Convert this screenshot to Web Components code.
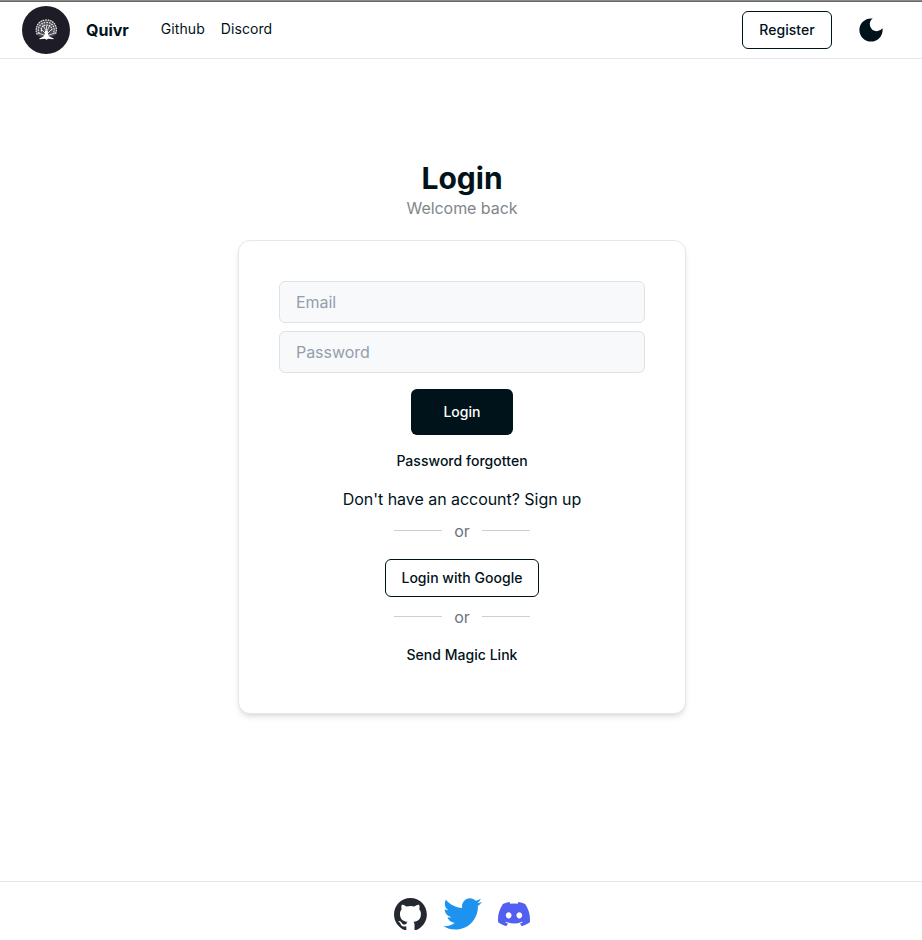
<!DOCTYPE html>
<html lang="en">
<head>
<meta charset="utf-8">
<title>Quivr</title>
<style>
html,body{height:100%}
body{margin:0;background:#fff;color:#00121a;font-family:Inter,"Liberation Sans",sans-serif;font-size:16px;line-height:24px}
</style>
</head>
<body>
<quivr-app></quivr-app>
<script>
function define(name, markup) {
  const template = document.createElement('template');
  template.innerHTML = markup;
  customElements.define(name, class extends HTMLElement {
    constructor() {
      super();
      this.attachShadow({ mode: 'open' }).appendChild(template.content.cloneNode(true));
    }
  });
}

define('quivr-logo', `
<style>:host{display:block;width:48px;height:48px}svg{display:block}</style>
<svg width="48" height="48" viewBox="0 0 48 48">
  <circle cx="24" cy="24" r="24" fill="#1e1c26"/>
  <path d="M15 29C12 23 15 13.500 24.500 13.500S37 23 33.500 29q-4 3-9 1.500-6 1.500-9.500-1.500z" fill="#77757d" opacity=".5"/>
  <g fill="none" stroke="#e6e5e9" stroke-linecap="round">
    <path d="M24.500 31V20M24 28l-5-5M25 28l5-5M24 25l-3-6M25 25l3-6M22 29l-6-2M27 29l6-2" stroke-width=".9"/>
    <g stroke-width="1.300">
      <path d="M15 28C12.500 22 16 14 24.500 14S36 22 33.500 28" stroke-dasharray=".5 1.900"/>
      <path d="M17 27C15 22 18 16.500 24.500 16.500S33.500 22 31.500 27" stroke-dasharray=".6 2"/>
      <path d="M19.500 25C18.500 22 20.500 19 24.500 19S30.500 22 29.500 25" stroke-dasharray=".5 1.900"/>
    </g>
  </g>
  <path d="M23 25h2.800c0 4.500 1.500 6.200 5.700 7.300v1l-5.200-.5-1.800 1-1.800-1-5.200.5v-1c4.200-1.100 5.500-2.800 5.500-7.300z" fill="#fff"/>
</svg>`);

define('quivr-button', `
<style>
:host{display:inline-flex}
button{flex:1;box-sizing:border-box;margin:0;font:500 14px/20px Inter,"Liberation Sans",sans-serif;letter-spacing:.03px;color:#00121a;background:transparent;border:1px solid transparent;border-radius:6px;padding:8px 0;white-space:nowrap}
:host([variant=outline]) button{border-color:#00121a}
:host([variant=primary]) button{background:#00121a;color:#fff;padding:12px 0}
</style><button type="button"><slot></slot></button>`);

define('quivr-header', `
<style>
:host{display:flex;box-sizing:border-box;height:59px;border-bottom:1px solid #e5e7eb;padding:6px 35px 4px 22px;align-items:flex-start}
.brand{display:flex;align-items:center;gap:16px;height:48px}
b{font-weight:700}
nav{display:flex;gap:16px;margin-left:32px;padding-top:13px;font-size:14px;line-height:20px;letter-spacing:.07px}
.actions{display:flex;align-items:center;gap:23px;margin-left:auto;height:48px}
.actions quivr-button{width:90px}
svg{display:block}
:host::before{content:"";position:absolute;top:0;left:0;right:0;height:2px;background:linear-gradient(#8a8a8a 50%,#686868 50%)}
</style>
<div class="brand"><quivr-logo></quivr-logo><b>Quivr</b></div>
<nav><span>Github</span><span>Discord</span></nav>
<div class="actions"><quivr-button variant="outline">Register</quivr-button>
<svg width="32" height="32" viewBox="-.4 -.4 24.800 24.800" fill="currentColor"><path d="M12 3a9 9 0 1 0 9 9c0-.46-.04-.92-.1-1.360a5.389 5.389 0 0 1-4.400 2.260 5.403 5.403 0 0 1-3.140-9.800c-.44-.06-.9-.1-1.360-.1z"/></svg></div>`);

customElements.define('quivr-field', class extends HTMLElement {
  constructor() {
    super();
    this.attachShadow({ mode: 'open' }).innerHTML = `
<style>
:host{display:block}
input{display:block;box-sizing:border-box;width:100%;height:42px;margin:0;padding:8px 16px;border:1px solid #dfe2e4;border-radius:6px;background:#f8f9fb;font:400 16px/24px Inter,"Liberation Sans",sans-serif;letter-spacing:-.05px}
input::placeholder{color:#949dab;opacity:1}
</style><input>`;
  }
  connectedCallback() {
    const input = this.shadowRoot.querySelector('input');
    input.placeholder = this.getAttribute('label');
    input.type = this.getAttribute('type');
  }
});

define('quivr-divider', `
<style>
:host{display:flex;align-items:center;justify-content:center;gap:12px;height:24px;color:#6b7280}
i{width:48px;height:1px;background:#cbcfd5;margin-bottom:1px}
</style><i></i><span><slot></slot></span><i></i>`);

define('quivr-card', `
<style>
:host{display:flex;flex-direction:column;align-items:center;box-sizing:border-box;width:448px;height:474px;padding:40px;border:1px solid #e5e7eb;border-radius:12px;background:#fff;box-shadow:0 4px 6px -1px rgba(0,0,0,.1),0 2px 4px -2px rgba(0,0,0,.1)}
</style><slot></slot>`);

define('quivr-login', `
<style>
:host{display:flex;flex-direction:column;align-items:center;flex:1;padding:101px 0 0 2px}
h1{margin:0;font-size:30px;line-height:36px;font-weight:700}
p{margin:0}
.sub{color:#7f878c;margin-bottom:20px;letter-spacing:-.05px}
form{display:flex;flex-direction:column;align-items:center;width:100%;margin:0}
quivr-field{width:100%;margin-bottom:8px}
.submit{width:102px;margin:8px 0 7px}
.signup{margin:7px 0 8px;letter-spacing:-.04px}
.google{width:154px;margin:16px 0 8px}
.magic{margin-top:7px}
</style>
<h1>Login</h1><p class="sub">Welcome back</p>
<quivr-card><form>
<quivr-field label="Email" type="email"></quivr-field>
<quivr-field label="Password" type="password"></quivr-field>
<quivr-button class="submit" variant="primary">Login</quivr-button>
<quivr-button>Password forgotten</quivr-button>
<p class="signup">Don't have an account? Sign up</p>
<quivr-divider>or</quivr-divider>
<quivr-button class="google" variant="outline">Login with Google</quivr-button>
<quivr-divider>or</quivr-divider>
<quivr-button class="magic">Send Magic Link</quivr-button>
</form></quivr-card>`);

define('quivr-footer', `
<style>
:host{display:flex;box-sizing:border-box;height:59px;border-top:1px solid #e5e7eb;justify-content:center;align-items:flex-start;gap:16px;padding:16px 0 0 2px}
svg{display:block}
.discord{margin-top:4px}
</style>
<svg width="33" height="32.300" viewBox="0 0 98 96" fill="#24292f"><path fill-rule="evenodd" d="M48.854 0C21.839 0 0 22 0 49.217c0 21.756 13.993 40.172 33.405 46.690 2.427.49 3.316-1.059 3.316-2.362 0-1.141-.08-5.052-.08-9.127-13.590 2.934-16.420-5.867-16.420-5.867-2.184-5.704-5.420-7.170-5.420-7.170-4.448-3.015.324-3.015.324-3.015 4.934.326 7.523 5.052 7.523 5.052 4.367 7.496 11.404 5.378 14.235 4.074.404-3.178 1.699-5.378 3.074-6.600-10.839-1.141-22.243-5.378-22.243-24.283 0-5.378 1.940-9.778 5.014-13.200-.485-1.222-2.184-6.275.486-13.038 0 0 4.125-1.304 13.426 5.052a46.970 46.970 0 0 1 12.214-1.630c4.125 0 8.330.571 12.213 1.630 9.302-6.356 13.427-5.052 13.427-5.052 2.670 6.763.97 11.816.485 13.038 3.155 3.422 5.015 7.822 5.015 13.200 0 18.905-11.404 23.060-22.324 24.283 1.780 1.548 3.316 4.481 3.316 9.126 0 6.600-.08 11.897-.08 13.526 0 1.304.89 2.853 3.316 2.364 19.412-6.520 33.405-24.935 33.405-46.691C97.707 22 75.788 0 48.854 0z"/></svg>
<svg width="39" height="32" viewBox="0 0 248 204" fill="#1d92ef"><path d="M221.950 51.290c.15 2.170.15 4.340.15 6.530 0 66.730-50.800 143.690-143.690 143.690v-.04c-27.440.04-54.310-7.820-77.410-22.640 3.990.48 8 .72 12.020.73 22.740.02 44.830-7.610 62.720-21.660-21.610-.41-40.560-14.500-47.180-35.070 7.570 1.460 15.370 1.160 22.800-.87-23.560-4.760-40.510-25.460-40.510-49.500v-.64c7.020 3.910 14.880 6.080 22.920 6.320C11.580 63.310 4.740 33.790 18.140 10.710c25.640 31.550 63.470 50.730 104.080 52.760-4.070-17.540 1.490-35.920 14.610-48.250 20.340-19.120 52.330-18.140 71.450 2.190 11.310-2.230 22.150-6.380 32.070-12.260-3.770 11.690-11.660 21.620-22.200 27.930 10.010-1.180 19.790-3.860 29-7.950-6.780 10.160-15.320 19.010-25.200 26.160z"/></svg>
<svg class="discord" width="32" height="24.250" viewBox="0 0 127.140 96.360" fill="#5260f2"><path d="M107.700,8.070A105.150,105.150,0,0,0,81.470,0a72.060,72.060,0,0,0-3.360,6.830A97.680,97.680,0,0,0,49,6.830,72.370,72.370,0,0,0,45.640,0,105.890,105.890,0,0,0,19.390,8.090C2.790,32.650-1.710,56.600.54,80.210h0A105.730,105.730,0,0,0,32.710,96.360,77.700,77.700,0,0,0,39.600,85.250a68.420,68.420,0,0,1-10.850-5.180c.91-.66,1.800-1.340,2.660-2a75.570,75.570,0,0,0,64.320,0c.87.71,1.760,1.390,2.660,2a68.680,68.680,0,0,1-10.870,5.190,77,77,0,0,0,6.890,11.100A105.250,105.250,0,0,0,126.600,80.220h0C129.240,52.840,122.090,29.110,107.700,8.070ZM42.450,65.690C36.180,65.690,31,60,31,53s5-12.740,11.430-12.740S54,46,53.890,53,48.840,65.690,42.450,65.690Zm42.240,0C78.410,65.690,73.250,60,73.250,53s5-12.740,11.440-12.740S96.230,46,96.120,53,91.080,65.690,84.690,65.690Z"/></svg>`);

define('quivr-app', `
<style>:host{display:flex;flex-direction:column;height:940px;overflow:hidden}</style>
<quivr-header></quivr-header><quivr-login></quivr-login><quivr-footer></quivr-footer>`);
</script>
</body>
</html>
